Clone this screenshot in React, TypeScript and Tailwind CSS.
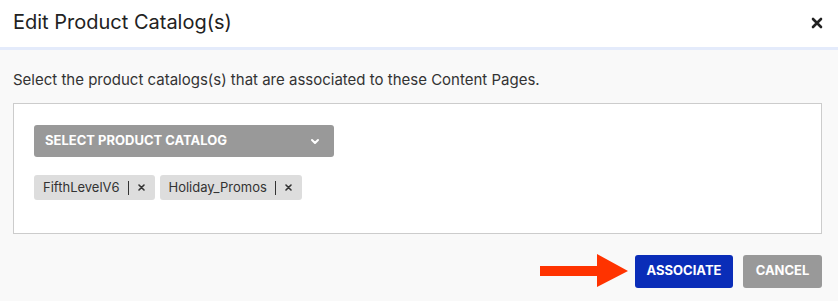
import React from 'react';

const TAGS = ['FifthLevelV6', 'Holiday_Promos'];

const Tag = ({ label }: { label: string }) => (
  <div className="h-[25px] flex items-center rounded-[3px] bg-[#dddddd] pl-[9px] pr-[10px] text-[13px] text-[#333333]">
    <span>{label}</span>
    <span className="ml-[8px] mr-[9px] h-[14px] w-px bg-[#333333]" />
    <svg width="7" height="7" viewBox="0 0 7 7" className="text-[#333333]">
      <path d="M1 1 L6 6 M6 1 L1 6" stroke="currentColor" strokeWidth="1.6" strokeLinecap="round" />
    </svg>
  </div>
);

export default function App() {
  return (
    <div className="w-[838px] h-[301px] bg-[#f9f9f9] font-['Inter',sans-serif] flex flex-col">
      <div className="h-[50px] bg-white border-b-[3px] border-[#e4ebfb] flex items-center justify-between px-[13px] pb-[4px]">
        <h1 className="text-[20px] text-[#222222]">Edit Product Catalog(s)</h1>
        <svg width="12" height="12" viewBox="0 0 12 12" className="mr-[2px] mt-[2px] text-[#222222]">
          <path d="M2 2 L10 10 M10 2 L2 10" stroke="currentColor" strokeWidth="2.6" strokeLinecap="round" />
        </svg>
      </div>

      <div className="flex-1 pl-[13px] pr-[16px] pt-[19px]">
        <p className="text-[15px] leading-[22px] text-[#333333]">
          Select the product catalogs(s) that are associated to these Content Pages.
        </p>

        <div className="mt-[12px] h-[131px] bg-white border border-[#cccccc] px-[20px] pt-[21px]">
          <div className="w-[300px] h-[32px] rounded-[3px] bg-[#999999] flex items-center justify-between pl-[11px] pr-[14px]">
            <span className="text-[13px] font-bold text-white">SELECT PRODUCT CATALOG</span>
            <svg width="10" height="7" viewBox="0 0 10 7" className="text-white">
              <path d="M2 2 L5 5 L8 2" stroke="currentColor" strokeWidth="2" fill="none" strokeLinecap="round" strokeLinejoin="round" />
            </svg>
          </div>
          <div className="mt-[18px] flex gap-[5px]">
            {TAGS.map((t) => (
              <Tag key={t} label={t} />
            ))}
          </div>
        </div>

        <div className="mt-[20px] flex items-center justify-end gap-[10px]">
          <svg width="90" height="34" viewBox="0 0 90 34" className="mr-[-5px]">
            <polygon points="0,12 57,12 57,0 88,17 57,33 57,22 0,22" fill="#ff3300" />
          </svg>
          <button className="w-[98px] h-[33px] rounded-[3px] bg-[#0a2db8] text-white text-[13px] font-bold">ASSOCIATE</button>
          <button className="w-[79px] h-[33px] rounded-[3px] bg-[#999999] text-white text-[13px] font-bold">CANCEL</button>
        </div>
      </div>
    </div>
  );
}
